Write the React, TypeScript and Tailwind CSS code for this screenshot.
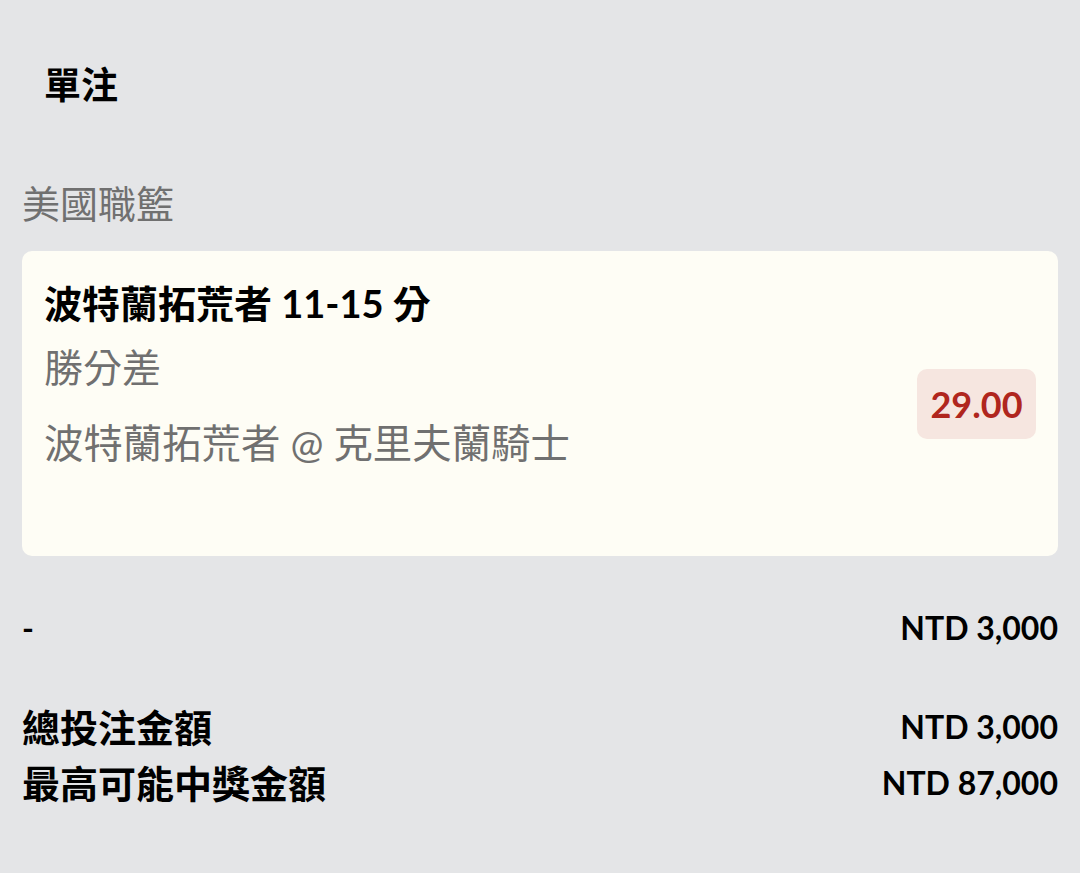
import React from "react";

const font = { fontFamily: 'Lato, "Noto Sans CJK TC", sans-serif' };

export default function App() {
  return (
    <div
      className="min-h-[873px] w-full bg-[#e4e5e7] px-[22px] text-black"
      style={font}
    >
      <div className="pt-[62px] pl-[22px] text-[37px] font-bold leading-[46px]">
        單注
      </div>
      <div className="mt-[71px] text-[38px] leading-[48px] text-[#707070]">
        美國職籃
      </div>
      <div className="mt-[24px] flex h-[305px] items-center justify-between rounded-[10px] bg-[#fefdf5] pl-[22px] pr-[22px]">
        <div className="flex h-full flex-col pt-[29px]">
          <div className="text-[38px] font-bold leading-[46px]">
            波特蘭拓荒者 11-15 分
          </div>
          <div className="mt-[18px] text-[39px] leading-[46px] text-[#707070]">
            勝分差
          </div>
          <div className="mt-[30px] text-[39.4px] leading-[46px] text-[#707070]">
            波特蘭拓荒者 @ 克里夫蘭騎士
          </div>
        </div>
        <div className="flex h-[70px] w-[119px] items-center justify-center rounded-[10px] bg-[#f6e6e0] text-[36px] font-bold text-[#b0261e]">
          29.00
        </div>
      </div>
      <div className="mt-[50px] flex items-center justify-between text-[32px] font-bold leading-[44px]">
        <span>-</span>
        <span>NTD 3,000</span>
      </div>
      <div className="mt-[55px] flex items-center justify-between text-[32px] font-bold leading-[44px]">
        <span className="text-[38px]">總投注金額</span>
        <span>NTD 3,000</span>
      </div>
      <div className="mt-[12px] flex items-center justify-between text-[32px] font-bold leading-[44px]">
        <span className="text-[38px]">最高可能中獎金額</span>
        <span>NTD 87,000</span>
      </div>
    </div>
  );
}
